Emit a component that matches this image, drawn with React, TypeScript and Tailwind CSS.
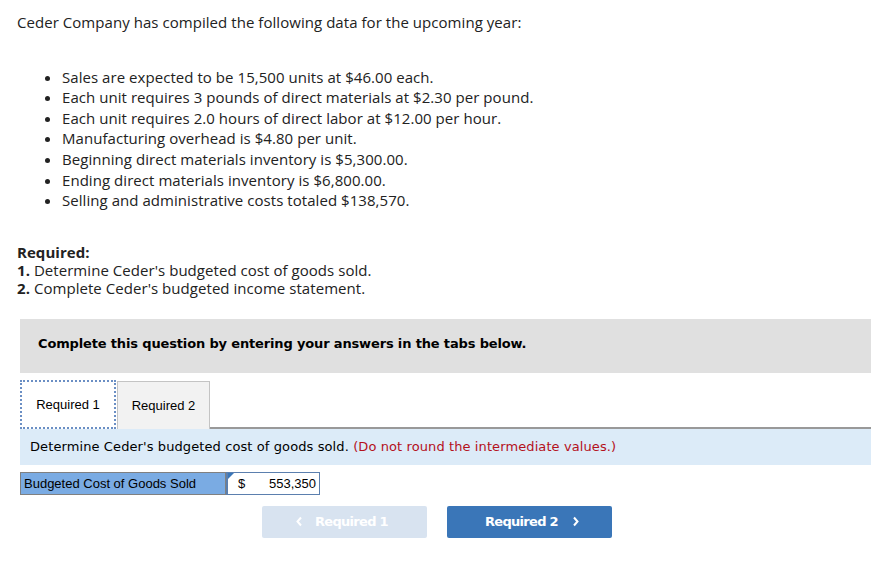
import React from 'react';

const facts = [
  'Sales are expected to be 15,500 units at $46.00 each.',
  'Each unit requires 3 pounds of direct materials at $2.30 per pound.',
  'Each unit requires 2.0 hours of direct labor at $12.00 per hour.',
  'Manufacturing overhead is $4.80 per unit.',
  'Beginning direct materials inventory is $5,300.00.',
  'Ending direct materials inventory is $6,800.00.',
  'Selling and administrative costs totaled $138,570.',
];

const Chevron: React.FC<{ dir: 'left' | 'right' }> = ({ dir }) => (
  <svg width="8" height="11" viewBox="0 0 8 11" className="shrink-0">
    <path
      d={dir === 'left' ? 'M6 1.5 L2.5 5.5 L6 9.5' : 'M2 1.5 L5.5 5.5 L2 9.5'}
      fill="none"
      stroke="currentColor"
      strokeWidth="2"
    />
  </svg>
);

const App: React.FC = () => {
  return (
    <div className="w-[893px] h-[568px] bg-white text-[#222]">
      <div className="pl-[17px] pt-[12px] font-['Open_Sans',sans-serif] text-[15px] leading-[20.6px] tracking-[0.05px]">
        <p>Ceder Company has compiled the following data for the upcoming year:</p>
        <ul className="mt-[34px] pl-[45px] list-disc">
          {facts.map((f) => (
            <li key={f}>{f}</li>
          ))}
        </ul>
        <div className="mt-[32px] leading-[18px]">
          <p className="font-bold">Required:</p>
          <p>
            <span className="font-bold">1.</span> Determine Ceder's budgeted cost of goods sold.
          </p>
          <p>
            <span className="font-bold">2.</span> Complete Ceder's budgeted income statement.
          </p>
        </div>
      </div>

      <div className="ml-[20px] w-[851px] mt-[22px]">
        <div className="h-[54px] bg-[#e0e0e0] flex items-center pl-[18px] pb-[5px] font-['DejaVu_Sans',sans-serif] text-[13px] font-bold text-black tracking-[-0.15px]">
          Complete this question by entering your answers in the tabs below.
        </div>

        <div className="mt-[7px] flex items-end">
          <div className="w-[96px] h-[49px] border-2 border-dotted border-[#6b8fc4] bg-white flex items-center justify-center font-['Liberation_Sans',sans-serif] text-[13px] text-black">
            Required 1
          </div>
          <div className="w-[93px] h-[48px] ml-[1px] border border-b-0 border-[#c4c4c4] bg-[#f2f2f2] flex items-center justify-center font-['Liberation_Sans',sans-serif] text-[13px] text-black">
            Required 2
          </div>
          <div className="flex-1 border-b-2 border-[#999]" />
        </div>

        <div className="h-[36px] bg-[#dcebf8] flex items-center pl-[10px] font-['DejaVu_Sans',sans-serif] text-[13px] text-black tracking-[0.1px]">
          Determine Ceder's budgeted cost of goods sold.&nbsp;
          <span className="text-[#b4111c]">(Do not round the intermediate values.)</span>
        </div>

        <div className="mt-[7px] flex h-[23px] font-['Liberation_Sans',sans-serif] text-[13px]">
          <div className="w-[206px] bg-[#7aabe3] border border-[#808080] flex items-center pl-[3px] text-black">
            Budgeted Cost of Goods Sold
          </div>
          <div className="relative w-[94px] border border-[#5b7fae] border-l-2 bg-white flex items-center justify-between px-[10px] pr-[3px] text-black">
            <span className="absolute left-0 top-0 w-0 h-0 border-t-[6px] border-r-[6px] border-t-[#3a76b8] border-r-transparent" />
            <span>$</span>
            <span>553,350</span>
          </div>
        </div>

        <div className="mt-[11px] flex gap-[20px] pl-[242px] font-['DejaVu_Sans',sans-serif] text-[13px] font-bold tracking-[-0.7px]">
          <div className="w-[165px] h-[32px] rounded-[2px] bg-[#d8e3f0] text-white flex items-center justify-center gap-[12px] pr-[6px]">
            <Chevron dir="left" />
            <span>Required 1</span>
          </div>
          <div className="w-[165px] h-[32px] rounded-[2px] bg-[#3a76b8] text-white flex items-center justify-center gap-[14px] pl-[6px]">
            <span>Required 2</span>
            <Chevron dir="right" />
          </div>
        </div>
      </div>
    </div>
  );
};

export default App;
